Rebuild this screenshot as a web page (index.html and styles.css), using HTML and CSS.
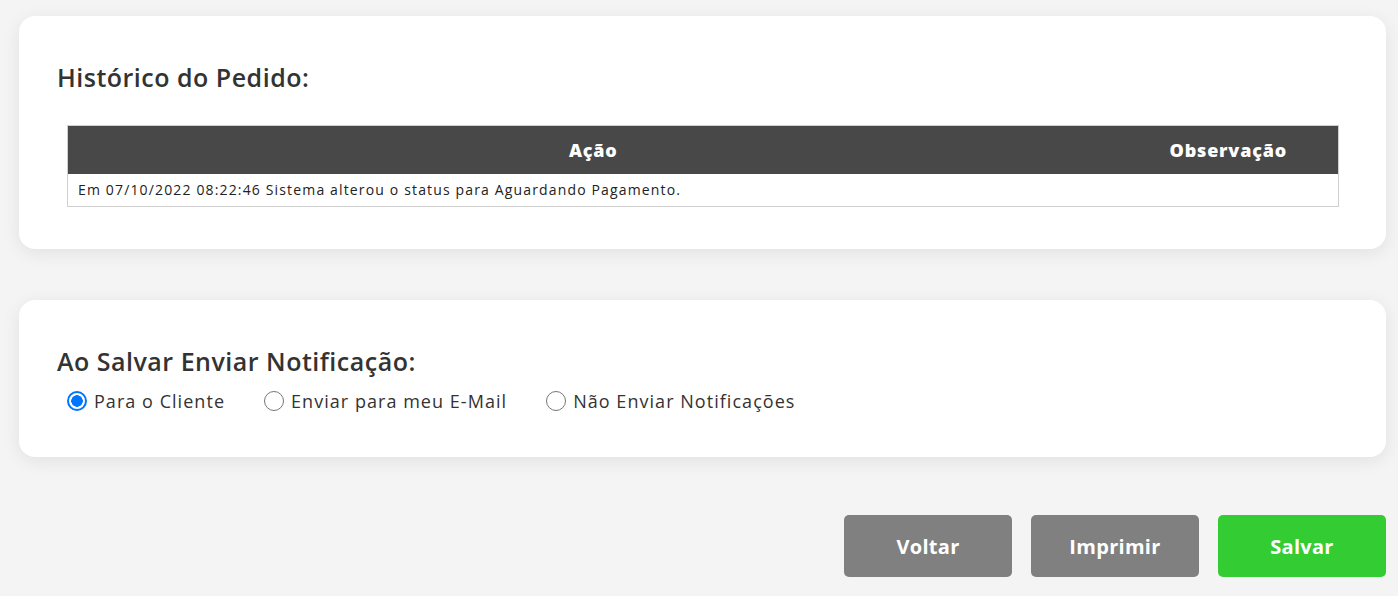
FILE: index.html
```html
<!DOCTYPE html>
<html lang="pt-BR">
<head>
<meta charset="utf-8">
<title>Pedido</title>
<link rel="stylesheet" href="styles.css">
</head>
<body>
<main class="page">
  <section class="card card-history">
    <h2 class="card-title">Histórico do Pedido:</h2>
    <table class="history">
      <thead>
        <tr><th class="col-action">Ação</th><th class="col-obs">Observação</th></tr>
      </thead>
      <tbody>
        <tr><td colspan="2">Em 07/10/2022 08:22:46 Sistema alterou o status para Aguardando Pagamento.</td></tr>
      </tbody>
    </table>
  </section>

  <section class="card card-notify">
    <h2 class="card-title">Ao Salvar Enviar Notificação:</h2>
    <div class="radios">
      <label class="radio"><input type="radio" name="notif" checked><span>Para o Cliente</span></label>
      <label class="radio"><input type="radio" name="notif"><span>Enviar para meu E-Mail</span></label>
      <label class="radio"><input type="radio" name="notif"><span>Não Enviar Notificações</span></label>
    </div>
  </section>

  <div class="actions">
    <button class="btn btn-grey">Voltar</button>
    <button class="btn btn-grey">Imprimir</button>
    <button class="btn btn-green">Salvar</button>
  </div>
</main>
</body>
</html>
```
FILE: styles.css
```css
* { box-sizing: border-box; }
html, body { margin: 0; padding: 0; }
body {
  background: #f4f4f4;
  font-family: "Open Sans", "Noto Sans", sans-serif;
  color: #333;
}
.page {
  padding: 16px 12px 0 19px;
  display: flex;
  flex-direction: column;
}
.card {
  background: #fff;
  border-radius: 16px;
  box-shadow: 0 4px 18px rgba(0, 0, 0, 0.08);
  padding: 0 47px 0 38px;
}
.card-history {
  height: 233px;
  padding-top: 46px;
}
.card-notify {
  margin-top: 51px;
  height: 157px;
  padding-top: 46px;
}
.card-title {
  margin: 0;
  font-size: 25px;
  line-height: 30px;
  font-weight: 600;
  color: #333;
  letter-spacing: 0.5px;
}
.history {
  margin: 33px 0 0 10px;
  width: calc(100% - 10px);
  border-collapse: collapse;
  border: 1px solid #cfcfcf;
}
.history thead th {
  background: #484848;
  color: #fff;
  height: 48px;
  font-size: 18px;
  font-weight: 800;
  letter-spacing: 0.8px;
  text-align: center;
  padding: 0;
}
.col-obs { width: 220px; }
.history td {
  height: 33px;
  padding: 0 10px;
  font-size: 14px;
  color: #222;
  letter-spacing: 1.15px;
}
.radios {
  display: flex;
  align-items: center;
  gap: 39px;
  padding: 13px 0 0 10px;
}
.radio {
  display: flex;
  align-items: center;
  gap: 7px;
  font-size: 18px;
  color: #333;
  letter-spacing: 1.04px;
}
.radio input {
  appearance: none;
  -webkit-appearance: none;
  margin: 0;
  width: 20px;
  height: 20px;
  border-radius: 50%;
  border: 1.5px solid #767676;
  background: #fff;
}
.radio input:checked {
  border: 2px solid #0075ff;
  background: radial-gradient(circle, #0075ff 0 5.5px, #fff 6px);
}
.actions {
  display: flex;
  justify-content: flex-end;
  gap: 19px;
  margin-top: 58px;
}
.btn {
  width: 168px;
  height: 62px;
  border: 0;
  border-radius: 5px;
  color: #fff;
  font-family: "Open Sans", sans-serif;
  font-size: 20px;
  font-weight: 700;
  letter-spacing: 0.3px;
}
.btn-grey { background: #808080; }
.btn-green { background: #33cc33; }
```
